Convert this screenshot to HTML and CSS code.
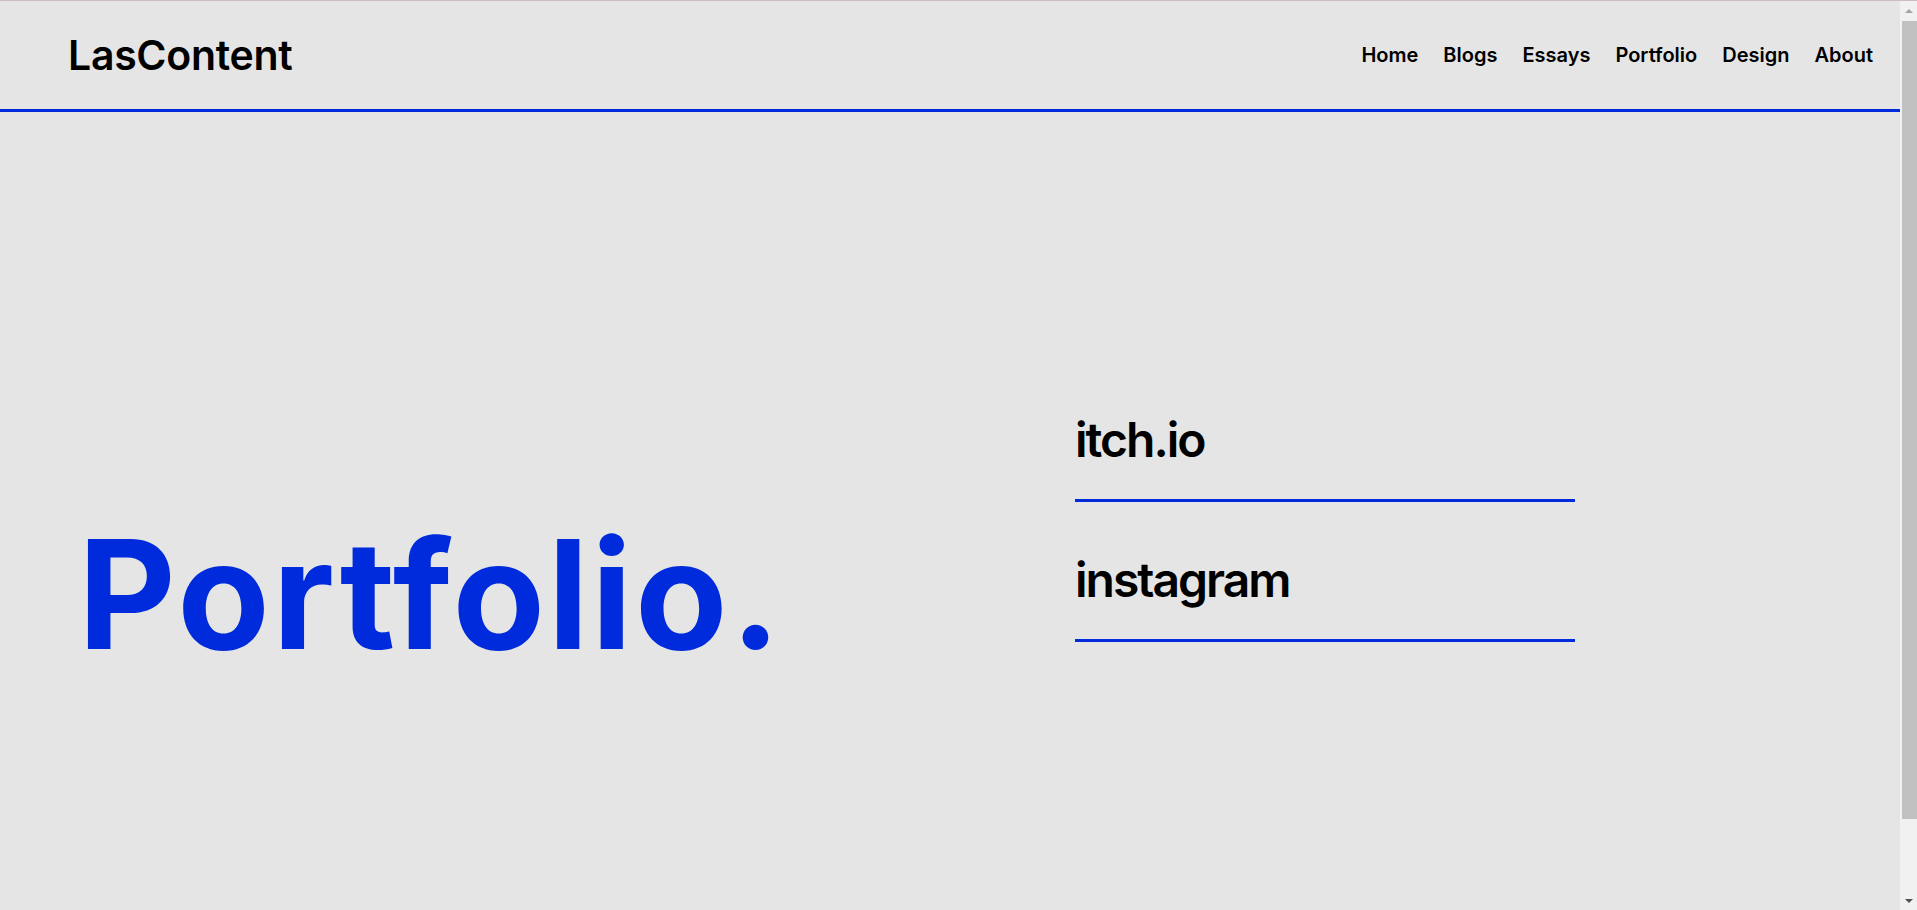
FILE: index.html
```html
<!DOCTYPE html>
<html lang="en">
<head>
<meta charset="utf-8">
<title>Portfolio - LasContent</title>
<link rel="stylesheet" href="styles.css">
</head>
<body>
<div class="page">
  <header class="site-header">
    <a class="logo" href="#">LasContent</a>
    <nav class="main-nav">
      <a href="#">Home</a>
      <a href="#">Blogs</a>
      <a href="#">Essays</a>
      <a href="#">Portfolio</a>
      <a href="#">Design</a>
      <a href="#">About</a>
    </nav>
  </header>
  <main class="hero">
    <h1 class="hero-title">Portfolio.</h1>
    <ul class="link-list">
      <li class="link-item"><a href="#">itch.io</a></li>
      <li class="link-item"><a href="#">instagram</a></li>
    </ul>
  </main>
</div>
<div class="scrollbar" aria-hidden="true">
  <span class="scroll-arrow scroll-up"></span>
  <span class="scroll-thumb"></span>
  <span class="scroll-arrow scroll-down"></span>
</div>
</body>
</html>
```
FILE: styles.css
```css
html, body {
  margin: 0;
  padding: 0;
}
body {
  background: #e5e5e5;
  color: #000;
  font-family: Inter, "Liberation Sans", sans-serif;
  border-top: 1px solid #cdbfbf;
}
a {
  color: inherit;
  text-decoration: none;
}
.page {
  margin-right: 17px;
}
.site-header {
  height: 108px;
  display: flex;
  align-items: center;
  justify-content: space-between;
  padding: 0 27px 0 68px;
  border-bottom: 3px solid #002bdc;
}
.logo {
  font-size: 41px;
  font-weight: 600;
  letter-spacing: -0.3px;
}
.main-nav {
  display: flex;
  gap: 25px;
  font-size: 20px;
  font-weight: 600;
}
.hero {
  display: flex;
  align-items: flex-start;
  padding: 250px 0 0 78px;
  min-height: 638px;
}
.hero-title {
  margin: 157px 0 0;
  width: 997px;
  font-size: 151px;
  line-height: 1;
  font-weight: 700;
  letter-spacing: 2.7px;
  color: #002bdc;
}
.link-list {
  list-style: none;
  margin: 0;
  padding: 0;
  width: 500px;
}
.link-item {
  padding: 42px 0 23px;
  font-size: 48px;
  line-height: 72px;
  font-weight: 600;
  letter-spacing: -2px;
  border-bottom: 3px solid #002bdc;
}

/* browser scrollbar as seen in the capture */
.scrollbar {
  position: fixed;
  top: 1px;
  right: 0;
  bottom: 0;
  width: 17px;
  background: #f1f1f1;
  display: flex;
  flex-direction: column;
  align-items: flex-end;
}
.scroll-arrow {
  width: 17px;
  height: 20px;
  display: flex;
  justify-content: center;
  align-items: center;
}
.scroll-arrow::before {
  content: "";
  width: 0;
  height: 0;
  border-left: 4px solid transparent;
  border-right: 4px solid transparent;
}
.scroll-up::before {
  border-bottom: 4px solid #a3a3a3;
}
.scroll-down::before {
  border-top: 4px solid #505050;
}
.scroll-thumb {
  width: 15px;
  flex: 0 0 798px;
  background: #c1c1c1;
}
.scroll-down {
  margin-top: auto;
  height: 18px;
}
```
